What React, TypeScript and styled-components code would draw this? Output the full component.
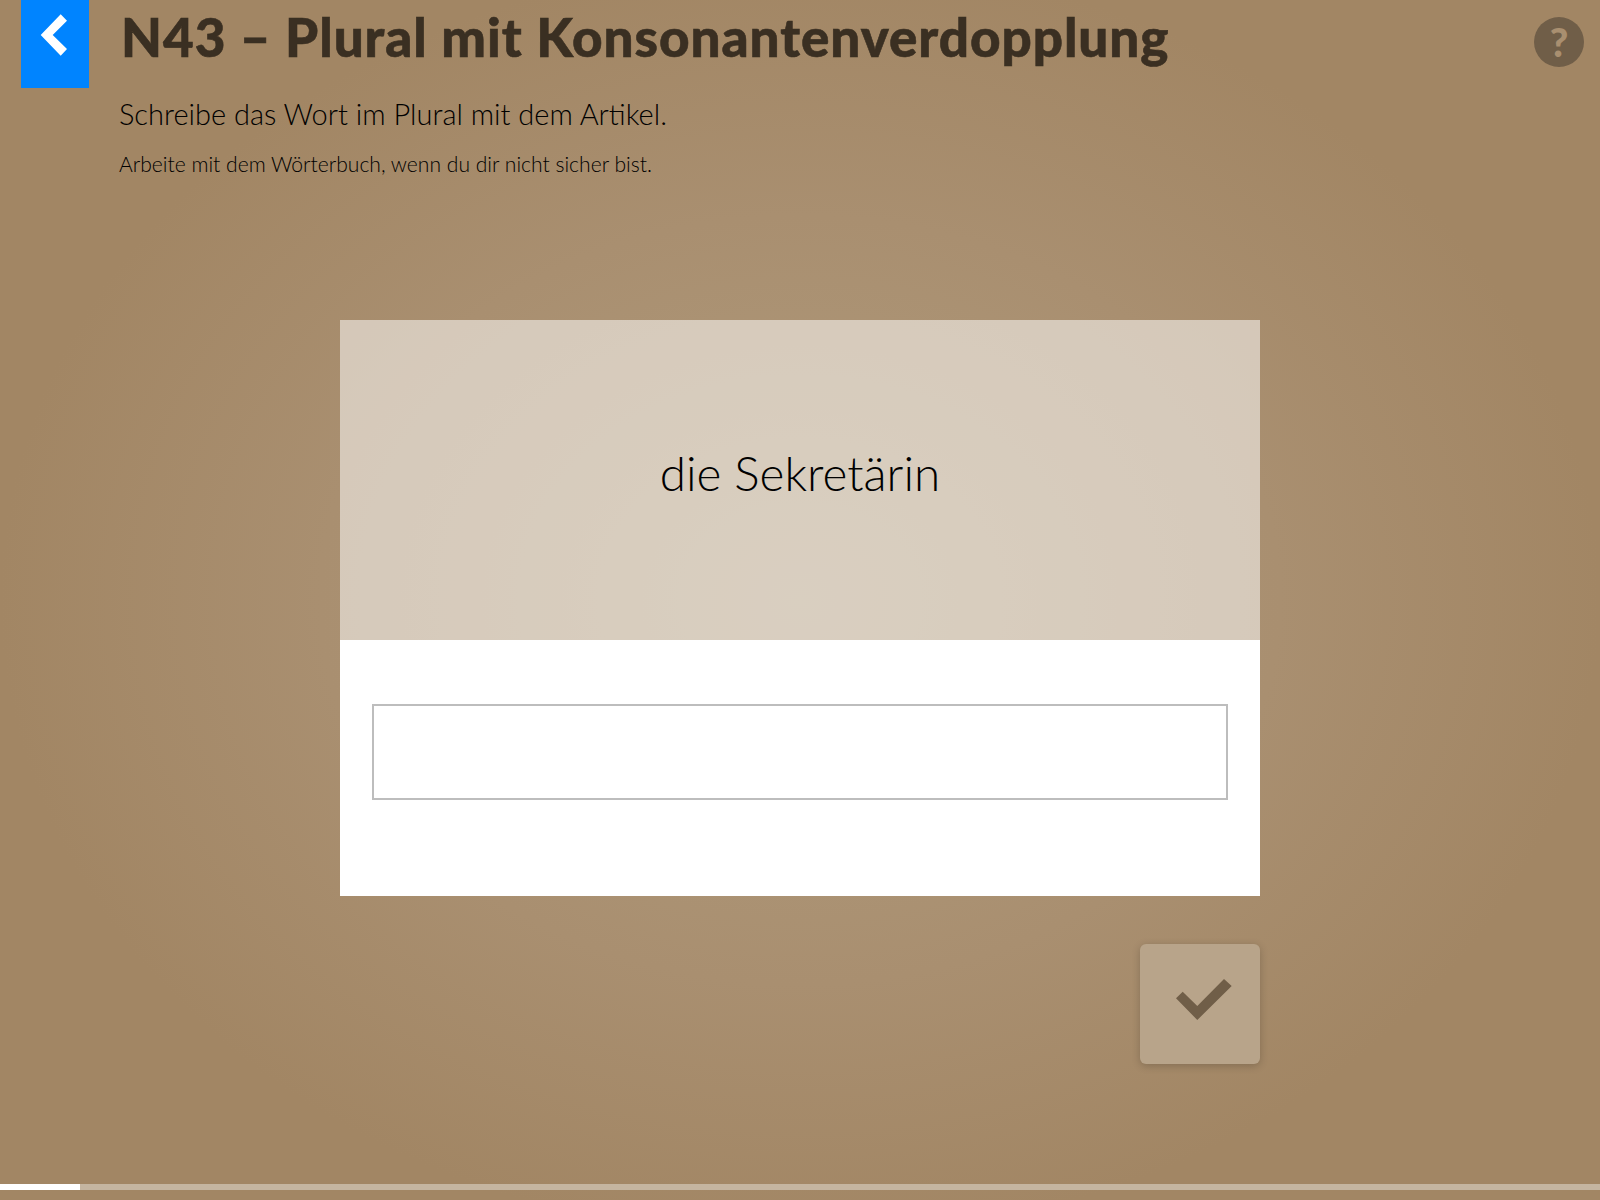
import React from 'react';
import styled, { createGlobalStyle } from 'styled-components';

const GlobalStyle = createGlobalStyle`
    html, body {
        margin: 0;
        padding: 0;
    }
    body {
        font-family: 'Lato', 'Noto Sans', sans-serif;
    }
`;

const Page = styled.div`
    position: relative;
    width: 1600px;
    height: 1200px;
    overflow: hidden;
    display: flex;
    flex-direction: column;
    background: radial-gradient(ellipse 800px 640px at 50% 50%, #b09b7c 0%, #a98f70 60%, #a28664 100%);
`;

const Header = styled.header`
    display: flex;
    align-items: flex-start;
    height: 320px;
    padding-left: 21px;
    box-sizing: border-box;
`;

const BackButton = styled.button`
    flex: none;
    width: 68px;
    height: 88px;
    padding: 0;
    border: none;
    background: #0084ff;
    svg {
        display: block;
    }
`;

const Heading = styled.div`
    flex: 1;
    padding-left: 30px;
`;

const Title = styled.h1`
    margin: 0 0 0 2px;
    height: 74px;
    font-size: 53px;
    line-height: 74px;
    font-weight: 900;
    letter-spacing: 0.95px;
    color: #3a2f22;
    -webkit-text-stroke: 0.6px #3a2f22;
`;

const Instruction = styled.p`
    margin: 21px 0 0;
    font-size: 29px;
    line-height: 38px;
    font-weight: 300;
    color: #000;
`;

const Hint = styled.p`
    margin: 17px 0 0;
    font-size: 21.1px;
    line-height: 28px;
    font-weight: 300;
    color: #000;
`;

const HelpButton = styled.div`
    flex: none;
    width: 50px;
    height: 50px;
    margin: 17px 16px 0 0;
    border-radius: 50%;
    background: #705e48;
    color: #a98f70;
    font-size: 40px;
    line-height: 50px;
    font-weight: 900;
    text-align: center;
`;

const Main = styled.main`
    width: 920px;
    margin: 0 auto;
`;

const Card = styled.section`
    display: flex;
    flex-direction: column;
`;

const Prompt = styled.div`
    height: 320px;
    padding-bottom: 16px;
    box-sizing: border-box;
    display: flex;
    align-items: center;
    justify-content: center;
    background: rgba(255, 255, 255, 0.52);
    font-size: 47.6px;
    font-weight: 300;
    color: #000;
`;

const AnswerArea = styled.div`
    height: 256px;
    padding: 64px 32px 0;
    box-sizing: border-box;
    background: #fff;
`;

const AnswerInput = styled.input`
    display: block;
    width: 100%;
    height: 96px;
    box-sizing: border-box;
    border: 2px solid #bdbdbd;
    border-radius: 0;
    background: #fff;
    outline: none;
`;

const Actions = styled.div`
    display: flex;
    justify-content: flex-end;
    margin-top: 48px;
`;

const CheckButton = styled.button`
    width: 120px;
    height: 120px;
    padding: 0;
    border: none;
    border-radius: 6px;
    background: #b8a48a;
    box-shadow: 0 2px 8px rgba(0, 0, 0, 0.2);
    svg {
        display: block;
    }
`;

const Progress = styled.div`
    position: absolute;
    left: 0;
    right: 0;
    bottom: 10px;
    height: 6px;
    background: #c5b5a0;
`;

const ProgressFill = styled.div`
    height: 100%;
    background: #fff;
`;

const App = () => {
    const progress = 5;

    return (
        <Page>
            <GlobalStyle />
            <Header>
                <BackButton aria-label='Zurück'>
                    <svg width='68' height='88' viewBox='0 0 68 88'>
                        <polygon points='19.7,35 39.7,14.3 46,20.7 31.7,35 46,49 39.7,55.7' fill='#fff' />
                    </svg>
                </BackButton>
                <Heading>
                    <Title>N43 – Plural mit Konsonantenverdopplung</Title>
                    <Instruction>Schreibe das Wort im Plural mit dem Artikel.</Instruction>
                    <Hint>Arbeite mit dem Wörterbuch, wenn du dir nicht sicher bist.</Hint>
                </Heading>
                <HelpButton>?</HelpButton>
            </Header>

            <Main>
                <Card>
                    <Prompt>die Sekretärin</Prompt>
                    <AnswerArea>
                        <AnswerInput type='text' />
                    </AnswerArea>
                </Card>
                <Actions>
                    <CheckButton aria-label='Prüfen'>
                        <svg width='120' height='120' viewBox='0 0 120 120'>
                            <polygon points='36,54.3 42.7,47.7 57.3,62 84,35 91.7,42 57.3,76' fill='#705e48' />
                        </svg>
                    </CheckButton>
                </Actions>
            </Main>

            <Progress>
                <ProgressFill style={{ width: `${progress}%` }} />
            </Progress>
        </Page>
    );
};

export default App;
